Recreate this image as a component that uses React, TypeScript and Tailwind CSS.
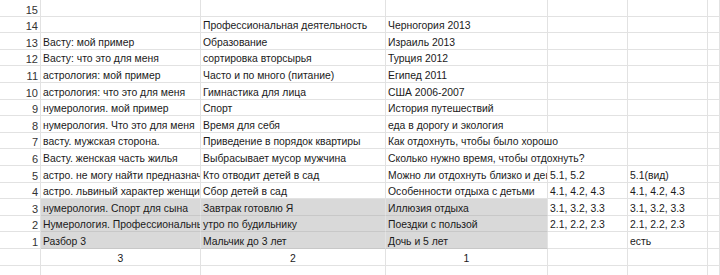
import React from "react";

type Row = {
  n: string;
  a?: string;
  b?: string;
  c?: string;
  d?: string;
  e?: string;
  grey?: boolean;
  spanC?: boolean;
};

const rows: Row[] = [
  { n: "15" },
  { n: "14", b: "Профессиональная деятельность", c: "Черногория 2013" },
  { n: "13", a: "Васту: мой пример", b: "Образование", c: "Израиль 2013" },
  { n: "12", a: "Васту: что это для меня", b: "сортировка вторсырья", c: "Турция 2012" },
  { n: "11", a: "астрология: мой пример", b: "Часто и по много (питание)", c: "Египед 2011" },
  { n: "10", a: "астрология: что это для меня", b: "Гимнастика для лица", c: "США 2006-2007" },
  { n: "9", a: "нумерология. мой пример", b: "Спорт", c: "История путешествий" },
  { n: "8", a: "нумерология. Что это для меня", b: "Время для себя", c: "еда в дорогу и экология" },
  { n: "7", a: "васту. мужская сторона.", b: "Приведение в порядок квартиры", c: "Как отдохнуть, чтобы было хорошо", spanC: true },
  { n: "6", a: "Васту. женская часть жилья", b: "Выбрасывает мусор мужчина", c: "Сколько нужно время, чтобы отдохнуть?", spanC: true },
  { n: "5", a: "астро. не могу найти предназначение", b: "Кто отводит детей в сад", c: "Можно ли отдохнуть близко и дешево", d: "5.1, 5.2", e: "5.1(вид)" },
  { n: "4", a: "астро. львиный характер женщины", b: "Сбор детей в сад", c: "Особенности отдыха с детьми", d: "4.1, 4.2, 4.3", e: "4.1, 4.2, 4.3" },
  { n: "3", a: "нумерология. Спорт для сына", b: "Завтрак готовлю Я", c: "Иллюзия отдыха", d: "3.1, 3.2, 3.3", e: "3.1, 3.2, 3.3", grey: true },
  { n: "2", a: "Нумерология. Профессиональный рост", b: "утро по будильнику", c: "Поездки с пользой", d: "2.1, 2.2, 2.3", e: "2.1, 2.2, 2.3", grey: true },
  { n: "1", a: "Разбор 3", b: "Мальчик до 3 лет", c: "Дочь и 5 лет", e: "есть", grey: true },
];

const base =
  "flex items-end overflow-hidden whitespace-nowrap border-r border-b px-[2px] pb-0 leading-[12px]";

function Cell({ text, grey, span, center }: { text?: string; grey?: boolean; span?: boolean; center?: boolean }) {
  return (
    <div
      className={
        base +
        (grey ? " bg-[#d9d9d9] border-r-[#e3e3e3] border-b-[#c8c8c8]" : " border-[#e2e2e2]") +
        (span ? " col-span-2" : "") +
        (center ? " justify-center" : "")
      }
    >
      {text}
    </div>
  );
}

export default function App() {
  return (
    <div
      className="w-[720px] h-[275px] overflow-hidden bg-white text-[10.4px] text-[#1a1a1a]"
      style={{ fontFamily: '"Liberation Sans", Arial, sans-serif' }}
    >
      <div className="grid grid-cols-[41px_160px_185px_162px_80px_80px_1fr] grid-rows-[17px_16px_17px_16px_17px_17px_16px_17px_16px_17px_17px_16px_17px_16px_17px_17px_17px]">
        {rows.map((r) => (
          <React.Fragment key={r.n}>
            <div className="flex items-end justify-end border-r border-b border-[#e2e2e2] pr-[2px] pb-0 leading-[12px] text-[11px] text-[#333]">
              {r.n}
            </div>
            <Cell text={r.a} grey={r.grey} />
            <Cell text={r.b} grey={r.grey} />
            <Cell text={r.c} grey={r.grey} span={r.spanC} />
            {!r.spanC && <Cell text={r.d} />}
            <Cell text={r.e} />
            <Cell />
          </React.Fragment>
        ))}
        <div className="border-r border-b border-[#e2e2e2]" />
        <Cell text="3" center />
        <Cell text="2" center />
        <Cell text="1" center />
        <Cell />
        <Cell />
        <Cell />
        <div className="border-r border-b border-[#e2e2e2]" />
        <Cell />
        <Cell />
        <Cell />
        <Cell />
        <Cell />
        <Cell />
      </div>
    </div>
  );
}
